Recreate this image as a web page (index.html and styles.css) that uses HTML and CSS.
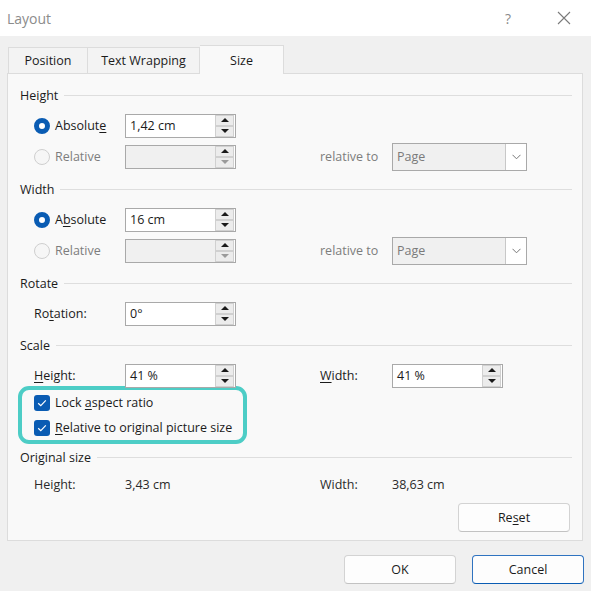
FILE: index.html
```html
<!DOCTYPE html>
<html lang="en">
<head>
  <meta charset="UTF-8">
  <title>Layout</title>
  <link rel="stylesheet" href="styles.css">
</head>
<body>
  <div class="titlebar">
    <span class="title">Layout</span>
    <span class="help">?</span>
    <svg class="close" width="14" height="14" viewBox="0 0 14 14">
      <path d="M1 1 L13 13 M13 1 L1 13" stroke="#7a7a7a" stroke-width="1.1" fill="none"/>
    </svg>
  </div>

  <div class="main">
    <div class="tabs">
      <div class="tab tab-pos">Position</div>
      <div class="tab tab-wrap">Text Wrapping</div>
      <div class="tab tab-size active">Size</div>
    </div>

    <div class="panel">
      <!-- Height -->
      <div class="group-title"><span>Height</span></div>
      <div class="rows">
        <div class="row">
          <label class="opt"><span class="radio on"></span><span>Absolut<u>e</u></span></label>
          <div class="spin">
            <span class="val">1,42 cm</span>
            <span class="arrows"><span class="up"></span><span class="down"></span></span>
          </div>
        </div>
        <div class="row">
          <label class="opt disabled"><span class="radio"></span><span>Relative</span></label>
          <div class="spin off">
            <span class="val"></span>
            <span class="arrows"><span class="up"></span><span class="down"></span></span>
          </div>
          <span class="muted">relative to</span>
          <div class="select">
            <span class="val">Page</span>
            <span class="drop"><svg width="9" height="6" viewBox="0 0 9 6"><path d="M0.5 0.8 L4.5 4.8 L8.5 0.8" stroke="#777" fill="none"/></svg></span>
          </div>
        </div>
      </div>

      <!-- Width -->
      <div class="group-title"><span>Width</span></div>
      <div class="rows">
        <div class="row">
          <label class="opt"><span class="radio on"></span><span>A<u>b</u>solute</span></label>
          <div class="spin">
            <span class="val">16 cm</span>
            <span class="arrows"><span class="up"></span><span class="down"></span></span>
          </div>
        </div>
        <div class="row">
          <label class="opt disabled"><span class="radio"></span><span>Relative</span></label>
          <div class="spin off">
            <span class="val"></span>
            <span class="arrows"><span class="up"></span><span class="down"></span></span>
          </div>
          <span class="muted">relative to</span>
          <div class="select">
            <span class="val">Page</span>
            <span class="drop"><svg width="9" height="6" viewBox="0 0 9 6"><path d="M0.5 0.8 L4.5 4.8 L8.5 0.8" stroke="#777" fill="none"/></svg></span>
          </div>
        </div>
      </div>

      <!-- Rotate -->
      <div class="group-title"><span>Rotate</span></div>
      <div class="rows tight">
        <div class="row">
          <span>Ro<u>t</u>ation:</span>
          <div class="spin">
            <span class="val">0°</span>
            <span class="arrows"><span class="up"></span><span class="down"></span></span>
          </div>
        </div>
      </div>

      <!-- Scale -->
      <div class="group-title"><span>Scale</span></div>
      <div class="rows flush">
        <div class="row">
          <span><u>H</u>eight:</span>
          <div class="spin">
            <span class="val">41 %</span>
            <span class="arrows"><span class="up"></span><span class="down"></span></span>
          </div>
          <span><u>W</u>idth:</span>
          <div class="spin">
            <span class="val">41 %</span>
            <span class="arrows"><span class="up"></span><span class="down"></span></span>
          </div>
        </div>
      </div>
      <div class="highlight">
        <label class="check-row"><span class="checkbox"><svg width="16" height="16" viewBox="0 0 16 16"><path d="M4.2 8.2 L6.8 10.7 L11.8 5.4" stroke="#fff" stroke-width="1.2" fill="none"/></svg></span><span>Lock <u>a</u>spect ratio</span></label>
        <label class="check-row"><span class="checkbox"><svg width="16" height="16" viewBox="0 0 16 16"><path d="M4.2 8.2 L6.8 10.7 L11.8 5.4" stroke="#fff" stroke-width="1.2" fill="none"/></svg></span><span><u>R</u>elative to original picture size</span></label>
      </div>

      <!-- Original size -->
      <div class="group-title orig"><span>Original size</span></div>
      <div class="rows info">
        <div class="row">
          <span>Height:</span>
          <span>3,43 cm</span>
          <span>Width:</span>
          <span>38,63 cm</span>
        </div>
      </div>
      <div class="reset-line">
        <button class="btn">Re<u>s</u>et</button>
      </div>
    </div>

    <div class="footer">
      <button class="btn">OK</button>
      <button class="btn primary">Cancel</button>
    </div>
  </div>
</body>
</html>
```

FILE: styles.css
```css
body {
  margin: 0;
  width: 591px;
  height: 591px;
  overflow: hidden;
  background: #f0f0f0;
  font-family: "Open Sans", "Noto Sans", sans-serif;
  font-size: 12.5px;
  color: #1b1b1b;
}

u {
  text-decoration-thickness: 1px;
  text-underline-offset: 2px;
}

/* title bar */
.titlebar {
  height: 36px;
  background: #fff;
  display: flex;
  align-items: center;
  padding: 0 20px 0 7px;
  box-sizing: border-box;
}

.title {
  flex: 1;
  font-size: 14px;
  color: #8c8c8c;
}

.help {
  font-size: 14px;
  color: #8a8a8a;
  margin-right: 46px;
}

/* tabs */
.main {
  padding: 9px 8px 0 7px;
}

.tabs {
  display: flex;
  align-items: flex-end;
  margin-left: 1px;
  margin-bottom: -1px;
}

.tab {
  position: relative;
  height: 25px;
  box-sizing: content-box;
  display: flex;
  align-items: center;
  justify-content: center;
  background: #f3f3f3;
  border: 1px solid #dcdcdc;
  border-left: none;
}

.tab-pos {
  width: 78px;
  border-left: 1px solid #dcdcdc;
}

.tab-wrap {
  width: 111px;
}

.tab-size {
  width: 83px;
}

.tab.active {
  height: 28px;
  background: #f9f9f9;
  border-bottom: none;
  z-index: 1;
}

/* panel */
.panel {
  background: #f9f9f9;
  border: 1px solid #dcdcdc;
  padding: 11px 10px 8px 12px;
}

.group-title {
  display: flex;
  align-items: center;
  height: 20px;
}

.group-title::after {
  content: "";
  flex: 1;
  height: 1px;
  background: #dedede;
  margin-left: 6px;
}

.group-title.orig {
  margin-top: 3px;
}

.rows {
  padding: 5px 0 7px 14px;
}

.rows.tight {
  padding-bottom: 6px;
}

.rows.flush {
  padding-bottom: 0;
}

.rows.info {
  padding-top: 2px;
  padding-bottom: 0;
  color: #2a2a2a;
}

.row {
  height: 31px;
  display: grid;
  grid-template-columns: 91px 195px 72px auto;
  align-items: center;
}

.opt {
  display: flex;
  align-items: center;
}

.opt.disabled,
.muted {
  color: #7d7d7d;
}

.radio {
  width: 16px;
  height: 16px;
  box-sizing: border-box;
  border-radius: 50%;
  border: 1px solid #cfcfcf;
  background: #f6f6f6;
  margin-right: 5px;
}

.radio.on {
  border: 5px solid #0a5cb3;
  background: #fff;
}

/* spin box */
.spin {
  width: 111px;
  height: 24px;
  box-sizing: border-box;
  border: 1px solid #a9a9a9;
  background: #fff;
  display: flex;
}

.spin .val {
  flex: 1;
  padding-left: 4px;
  line-height: 22px;
}

.spin.off .val {
  background: #f0f0f0;
}

.arrows {
  width: 19px;
  display: flex;
  flex-direction: column;
  padding: 0 1px 0 0;
  background: #fff;
}

.arrows span {
  flex: 1;
  background: #ececec;
  border: 1px solid #d0d0d0;
  display: flex;
  align-items: center;
  justify-content: center;
}

.arrows .up::after,
.arrows .down::after {
  content: "";
  border-left: 4px solid transparent;
  border-right: 4px solid transparent;
}

.arrows .up::after {
  border-bottom: 4px solid #1a1a1a;
}

.arrows .down::after {
  border-top: 4px solid #1a1a1a;
}

.spin.off .arrows .down::after {
  border-top-color: #9a9a9a;
}

/* dropdown */
.select {
  width: 135px;
  height: 28px;
  box-sizing: border-box;
  border: 1px solid #a9a9a9;
  background: #f0f0f0;
  display: flex;
  color: #7a7a7a;
}

.select .val {
  flex: 1;
  padding-left: 4px;
  line-height: 26px;
}

.select .drop {
  width: 20px;
  background: #fff;
  border-left: 1px solid #c8c8c8;
  display: flex;
  align-items: center;
  justify-content: center;
}

/* highlighted checkboxes */
.highlight {
  width: 229px;
  box-sizing: border-box;
  margin: -5px 0 0 -2px;
  border: 4px solid #4dcdc6;
  border-radius: 11px;
  padding-left: 12px;
}

.check-row {
  height: 25px;
  display: flex;
  align-items: center;
}

.checkbox {
  width: 16px;
  height: 16px;
  border-radius: 3px;
  background: #0a5cb3;
  margin-right: 5px;
  display: flex;
}

/* buttons */
.reset-line {
  display: flex;
  justify-content: flex-end;
  margin-top: 3px;
  padding-right: 2px;
}

.btn {
  width: 112px;
  height: 29px;
  font-family: inherit;
  font-size: 12.5px;
  color: #1b1b1b;
  background: #fdfdfd;
  border: 1px solid #d3d3d3;
  border-bottom-color: #c2c2c2;
  border-radius: 4px;
  padding: 0;
}

.footer {
  display: flex;
  justify-content: flex-end;
  gap: 16px;
  margin-top: 14px;
  margin-right: -1px;
}

.btn.primary {
  border-color: #2f73c0;
  border-bottom-color: #0a5cb3;
}
```
